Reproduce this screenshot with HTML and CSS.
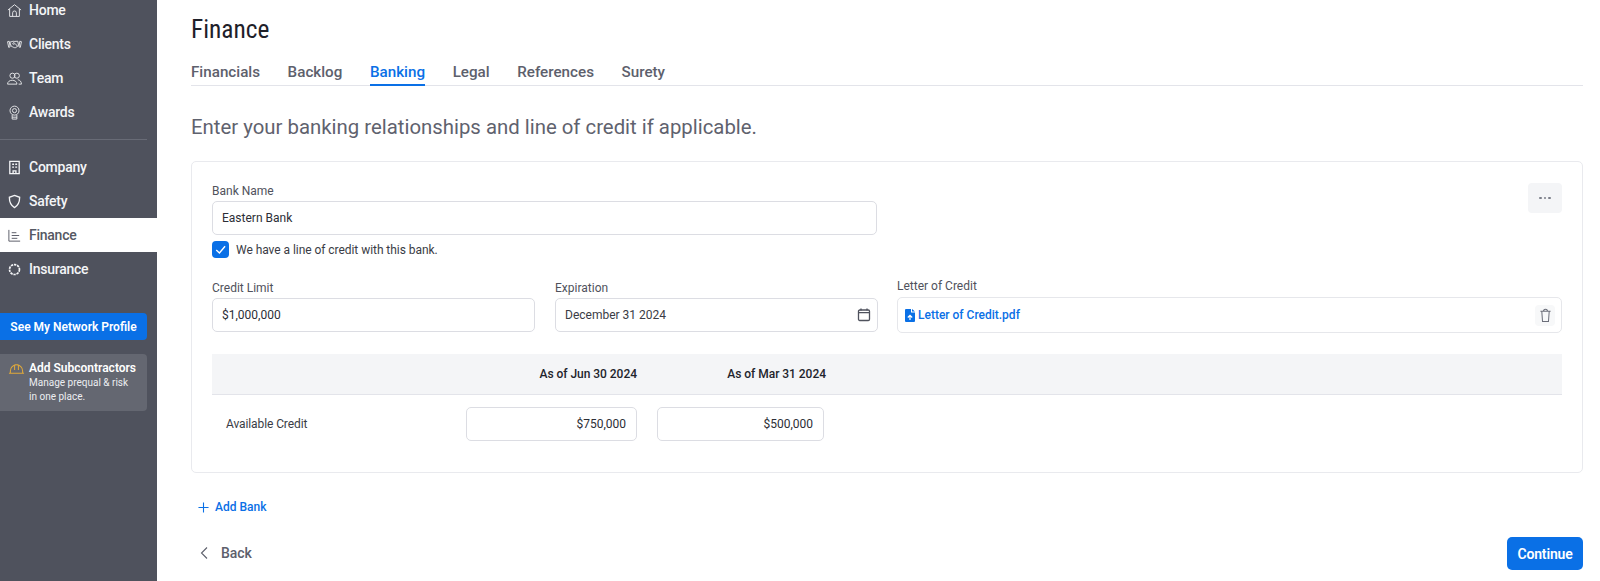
FILE: index.html
```html
<!DOCTYPE html>
<html lang="en">
<head>
<meta charset="utf-8">
<title>Finance</title>
<link rel="stylesheet" href="styles.css">
</head>
<body>
<div class="page">
  <aside class="sidebar">
    <nav class="nav nav-top">
      <a class="nav-item"><svg class="nav-icon" viewBox="0 0 16 16"><path d="M1 7.500 8 1.800l7 5.700M2.800 6.300V14.300h10.400V6.300M6 14.300v-3.800a2 2 0 0 1 4 0v3.800"/></svg>Home</a>
      <a class="nav-item"><svg class="nav-icon" viewBox="0 0 16 16"><path d="M.6 5l1.700-.5 1 6-1.500.5zM15.400 5l-1.700-.5-1 6 1.500.5zM3 5.500c2-.3 3-1.300 5-.8l3.500-.2.800 4.500-3 2.300c-1.500.5-3-.6-5-1.800zM8 5 6 7.300c.8.8 1.700.3 2.500-.5l2.500 2.800"/></svg>Clients</a>
      <a class="nav-item"><svg class="nav-icon" viewBox="0 0 16 16"><circle cx="5.800" cy="5" r="2.700"/><circle cx="10.500" cy="5" r="2.700"/><path d="M.6 14c0-5.500 10-5.500 10 0zM11.500 9.300c2.300.3 3.900 2 3.900 4.700h-3"/></svg>Team</a>
      <a class="nav-item"><svg class="nav-icon" viewBox="0 0 16 16"><circle cx="8" cy="6" r="4.800"/><circle cx="8" cy="6" r="2.200"/><path d="M5.500 10.500V15h5v-4.500M5.500 13h5"/></svg>Awards</a>
    </nav>
    <div class="nav-divider"></div>
    <nav class="nav">
      <a class="nav-item"><svg class="nav-icon nav-icon-mid" viewBox="0 0 16 16"><path d="M3 1.500h10v13H3zM6.500 14.500v-3h3v3M5.500 4.500h2M8.800 4.500h2M5.500 7.500h2M8.800 7.500h2"/></svg>Company</a>
      <a class="nav-item"><svg class="nav-icon nav-icon-mid" viewBox="0 0 16 16"><path d="M8 1.500 13.500 3.500c0 5-1 8.500-5.500 11-4.500-2.500-5.500-6-5.500-11z"/></svg>Safety</a>
      <a class="nav-item nav-item-active"><svg class="nav-icon" viewBox="0 0 16 16"><path d="M2 2v12h12M5 5h5M5 8h8M5 11h6"/></svg>Finance</a>
      <a class="nav-item"><svg class="nav-icon nav-icon-thick" viewBox="0 0 16 16"><circle cx="8" cy="8" r="5.300" stroke-dasharray="2.500 .9"/></svg>Insurance</a>
    </nav>
    <a class="network-btn">See My Network Profile</a>
    <div class="promo">
      <svg class="promo-icon" viewBox="0 0 18 14"><path d="M1 11.500h16M2.500 11.500V9a6.500 6.500 0 0 1 13 0v2.500M7 3v5M11 3v5M7 2.500h4"/></svg>
      <div class="promo-text">
        <div class="promo-title">Add Subcontractors</div>
        <div class="promo-desc">Manage prequal &amp; risk<br>in one place.</div>
      </div>
    </div>
  </aside>

  <main class="main">
    <h1 class="title">Finance</h1>
    <div class="tabs">
      <a class="tab">Financials</a>
      <a class="tab">Backlog</a>
      <a class="tab tab-active">Banking</a>
      <a class="tab">Legal</a>
      <a class="tab">References</a>
      <a class="tab">Surety</a>
    </div>
    <p class="intro">Enter your banking relationships and line of credit if applicable.</p>

    <section class="card">
      <div class="card-top">
        <div class="bank-col">
          <label class="label">Bank Name</label>
          <div class="field">Eastern Bank</div>
          <div class="check-row">
            <span class="checkbox"><svg viewBox="0 0 16 16"><path d="M4 8.500 7 11.300 12.300 5"/></svg></span>
            <span>We have a line of credit with this bank.</span>
          </div>
        </div>
        <button class="more-btn" aria-label="More"><span class="dot"></span><span class="dot"></span><span class="dot"></span></button>
      </div>

      <div class="credit-row">
        <div class="credit-col">
          <label class="label">Credit Limit</label>
          <div class="field">$1,000,000</div>
        </div>
        <div class="credit-col">
          <label class="label">Expiration</label>
          <div class="field field-date">December 31 2024
            <svg class="cal-icon" viewBox="0 0 14 14"><rect x="1.500" y="2.500" width="11" height="10.500" rx="1.200"/><path d="M1.500 5.200h11M4 1v2M10 1v2"/></svg>
          </div>
        </div>
        <div class="letter-col">
          <label class="label label-letter">Letter of Credit</label>
          <div class="file-box">
            <a class="file-link"><svg class="file-icon" viewBox="0 0 10 13"><path class="file-bg" d="M0 1a1 1 0 0 1 1-1h5v3.500h4V12a1 1 0 0 1-1 1H1a1 1 0 0 1-1-1zM7 0l3 2.500H7z"/><path class="file-arrow" d="M5 11V6.500M2.800 8.500 5 6.300l2.200 2.200"/></svg>Letter of Credit.pdf</a>
            <span class="trash"><svg viewBox="0 0 14 16"><path d="M1.500 3.500h11M3 3.500 3.800 14.500h6.400L11 3.500M4.800 3.500c0-3 4.400-3 4.400 0"/></svg></span>
          </div>
        </div>
      </div>

      <div class="table-head">
        <div class="th th-one">As of Jun 30 2024</div>
        <div class="th th-two">As of Mar 31 2024</div>
      </div>
      <div class="table-row">
        <div class="row-label">Available Credit</div>
        <div class="field field-num field-one">$750,000</div>
        <div class="field field-num field-two">$500,000</div>
      </div>
    </section>

    <a class="add-bank"><svg class="plus" viewBox="0 0 12 12"><path d="M6 .5v11M.5 6h11"/></svg>Add Bank</a>

    <div class="footer">
      <a class="back"><svg class="chev" viewBox="0 0 10 14"><path d="M8 1.500 2.500 7 8 12.500"/></svg>Back</a>
      <button class="continue">Continue</button>
    </div>
  </main>
</div>
</body>
</html>
```
FILE: styles.css
```css
* { box-sizing: border-box; }
html, body { margin: 0; padding: 0; }
body {
  width: 1600px;
  height: 581px;
  overflow: hidden;
  background: #fff;
  font-family: Roboto, "Liberation Sans", sans-serif;
  color: #2c2e36;
}
.page { display: flex; height: 581px; overflow: hidden; }

/* Sidebar */
.sidebar {
  width: 157px;
  flex: none;
  background: #4f525d;
  overflow: hidden;
}
.nav { display: flex; flex-direction: column; }
.nav-top { margin-top: -7px; }
.nav-item {
  display: flex;
  align-items: center;
  height: 34px;
  padding-left: 7px;
  font-size: 14px;
  letter-spacing: -.25px;
  font-weight: 500;
  color: #f4f5f7;
}
.nav-icon {
  width: 15px;
  height: 15px;
  margin-right: 7px;
  flex: none;
  fill: none;
  stroke: #e6e7ea;
  stroke-width: 1;
}
.nav-icon-mid { stroke-width: 1.400; stroke: #f4f5f7; }
.nav-icon-thick { stroke-width: 1.800; stroke: #f4f5f7; }
.nav-item-active { background: #fff; color: #555863; }
.nav-item-active .nav-icon { stroke: #555863; }
.nav-divider { height: 1px; background: #686b76; margin: 10px 10px 10px 0; }
.network-btn {
  display: flex;
  align-items: center;
  justify-content: center;
  width: 147px;
  height: 27px;
  margin-top: 27px;
  background: #0a70e6;
  border-radius: 0 4px 4px 0;
  font-size: 12px;
  font-weight: 600;
  color: #fff;
}
.promo {
  display: flex;
  width: 147px;
  height: 57px;
  margin-top: 14px;
  padding: 7px 0 0 8px;
  background: #646771;
  border-radius: 0 4px 4px 0;
}
.promo-icon {
  width: 17px;
  height: 14px;
  margin: 1px 4px 0 0;
  flex: none;
  fill: none;
  stroke: #e0a93a;
  stroke-width: 1.100;
}
.promo-title { font-size: 12px; font-weight: 600; line-height: 15px; color: #fff; }
.promo-desc { font-size: 10px; line-height: 14px; color: #eceef1; }

/* Main */
.main { flex: 1; min-width: 0; padding: 0 17px 0 34px; }
.title {
  margin: 14px 0 0;
  font-size: 25.400px;
  font-stretch: 85%;
  font-weight: 400;
  line-height: 30px;
  color: #1e2029;
}
.tabs {
  display: flex;
  gap: 27.600px;
  height: 42px;
  padding-top: 19px;
  border-bottom: 1px solid #e3e4ea;
}
.tab {
  height: 23px;
  font-size: 15.200px;
  font-weight: 500;
  line-height: 18px;
  color: #5d606c;
}
.tab-active { color: #0a70e6; border-bottom: 2px solid #0a70e6; }
.intro {
  margin: 28px 0 0;
  font-size: 20.360px;
  line-height: 26px;
  color: #5f626e;
}

.card {
  height: 312px;
  margin-top: 21px;
  padding: 21px 20px 0 20px;
  border: 1px solid #e9eaee;
  border-radius: 5px;
}
.card-top { display: flex; justify-content: space-between; }
.bank-col { width: 665px; }
.label {
  display: block;
  font-size: 12px;
  line-height: 17px;
  margin-bottom: 1px;
  color: #50525c;
}
.label-letter { margin-bottom: 2px; }
.field {
  display: flex;
  align-items: center;
  height: 34px;
  padding: 0 9px 1px;
  border: 1px solid #dcdde3;
  border-radius: 5px;
  font-size: 12px;
  color: #2c2e36;
}
.check-row {
  display: flex;
  align-items: center;
  gap: 7px;
  height: 17px;
  margin-top: 6px;
  font-size: 12px;
  letter-spacing: -.05px;
  color: #3a3c45;
}
.checkbox {
  width: 17px;
  height: 17px;
  background: #0a70e6;
  border-radius: 4px;
  flex: none;
}
.checkbox svg { display: block; fill: none; stroke: #fff; stroke-width: 1.300; }
.more-btn {
  display: flex;
  align-items: center;
  justify-content: center;
  gap: 2px;
  width: 34px;
  height: 30px;
  padding: 0;
  border: 0;
  border-radius: 4px;
  background: #f4f5f7;
}
.dot { width: 2.500px; height: 2.500px; border-radius: 50%; background: #7b7e89; }

.credit-row { display: flex; gap: 20px; margin-top: 22px; }
.credit-col { width: 323px; flex: none; }
.field-date { justify-content: space-between; color: #3a3c45; }
.cal-icon { width: 14px; height: 15px; margin-right: -3px; fill: none; stroke: #4f525d; stroke-width: 1.300; }
.letter-col { flex: 1; min-width: 0; margin: -2px 0 0 -1px; }
.file-box {
  display: flex;
  align-items: center;
  justify-content: space-between;
  height: 36px;
  padding: 0 6px 0 7px;
  border: 1px solid #e6e7eb;
  border-radius: 5px;
}
.file-link {
  display: flex;
  align-items: center;
  gap: 3px;
  font-size: 12px;
  font-weight: 500;
  color: #0a70e6;
}
.file-icon { width: 10px; height: 13px; flex: none; }
.file-bg { fill: #0a70e6; }
.file-arrow { fill: none; stroke: #fff; stroke-width: 1.200; }
.trash {
  display: flex;
  align-items: center;
  justify-content: center;
  width: 20px;
  height: 21px;
  background: #f7f8f9;
  border-radius: 4px;
}
.trash svg { width: 13px; height: 15px; fill: none; stroke: #6b6e79; stroke-width: 1.100; }

.table-head {
  display: flex;
  align-items: center;
  height: 41px;
  margin-top: 21px;
  background: #f4f5f7;
  border-bottom: 1px solid #e3e4ea;
  font-size: 12px;
  letter-spacing: -.03px;
}
.th { font-weight: 500; color: #22242c; text-align: right; white-space: nowrap; }
.th-one { width: 425px; }
.th-two { width: 189px; }
.table-row { display: flex; align-items: center; height: 34px; margin-top: 12px; }
.row-label { width: 254px; padding-left: 14px; font-size: 12px; letter-spacing: -.1px; color: #3a3c45; }
.field-num { justify-content: flex-end; height: 34px; padding: 0 10px 1px; }
.field-one { width: 171px; margin-right: 20px; }
.field-two { width: 167px; }

.add-bank {
  display: flex;
  align-items: center;
  height: 18px;
  margin: 25px 0 0 7px;
  font-size: 12px;
  font-weight: 500;
  color: #0a70e6;
}
.plus { width: 11px; height: 11px; margin-right: 6px; fill: none; stroke: #0a70e6; stroke-width: 1.200; }
.footer {
  display: flex;
  align-items: center;
  justify-content: space-between;
  margin-top: 21px;
}
.back {
  display: flex;
  align-items: center;
  margin-bottom: 2px;
  margin-left: 8px;
  font-size: 14px;
  letter-spacing: -.1px;
  font-weight: 500;
  color: #5d606c;
}
.chev { width: 10px; height: 14px; margin-right: 12px; fill: none; stroke: #5d606c; stroke-width: 1.100; }
.continue {
  width: 76px;
  height: 33px;
  padding: 0;
  border: 0;
  border-radius: 5px;
  background: #0a70e6;
  font-family: Roboto, sans-serif;
  font-size: 14px;
  letter-spacing: -.15px;
  font-weight: 600;
  color: #fff;
}
```
